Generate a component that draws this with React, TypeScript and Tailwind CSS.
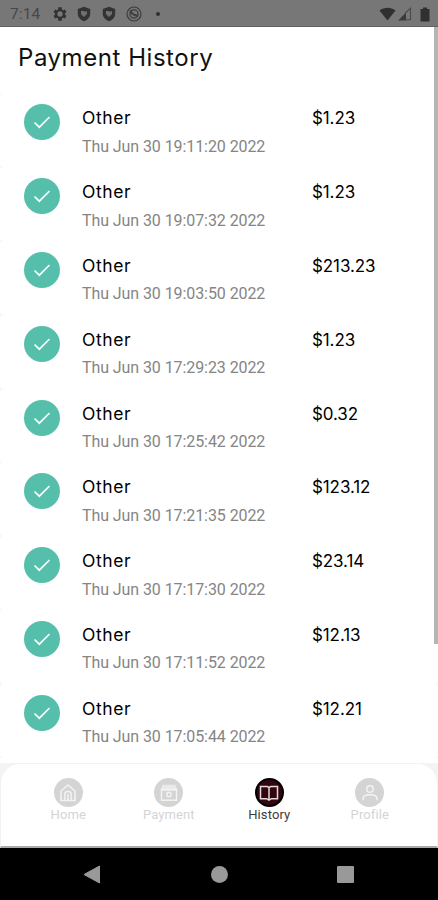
import React from "react";

const payments = [
  { title: "Other", date: "Thu Jun 30 19:11:20 2022", amount: "$1.23" },
  { title: "Other", date: "Thu Jun 30 19:07:32 2022", amount: "$1.23" },
  { title: "Other", date: "Thu Jun 30 19:03:50 2022", amount: "$213.23" },
  { title: "Other", date: "Thu Jun 30 17:29:23 2022", amount: "$1.23" },
  { title: "Other", date: "Thu Jun 30 17:25:42 2022", amount: "$0.32" },
  { title: "Other", date: "Thu Jun 30 17:21:35 2022", amount: "$123.12" },
  { title: "Other", date: "Thu Jun 30 17:17:30 2022", amount: "$23.14" },
  { title: "Other", date: "Thu Jun 30 17:11:52 2022", amount: "$12.13" },
  { title: "Other", date: "Thu Jun 30 17:05:44 2022", amount: "$12.21" },
];

function ShieldIcon() {
  return (
    <svg width="14" height="16" viewBox="0 0 14 16">
      <path d="M7 .8 13.200 3v4.800c0 3.500-2.600 6.200-6.200 7.400C3.400 14 .8 11.300.8 7.800V3Z" fill="#333" />
      <path d="M4 5h3l1 .7L10 5v3L7 11 4 8.200Z" fill="#707070" />
    </svg>
  );
}

function StatusBar() {
  return (
    <div className="flex h-[27px] shrink-0 items-center border-b border-[#626262] bg-[#777777] pl-[10px] pr-[8px] pt-[2px]">
      <span className="w-[42px] pt-[2px] font-['Roboto',sans-serif] text-[15.5px] leading-none tracking-[0.1px] text-[#484848]">
        7:14
      </span>
      <svg width="16" height="16" viewBox="0 0 24 24" fill="#333">
        <path d="M19.400 13a7.800 7.800 0 0 0 0-2l2.300-1.800-2.200-3.800-2.700 1.100a8 8 0 0 0-1.800-1L14.600 2H9.400L9 5.500a8 8 0 0 0-1.800 1L4.500 5.400 2.300 9.200 4.600 11a7.800 7.800 0 0 0 0 2l-2.300 1.800 2.200 3.800 2.700-1.100a8 8 0 0 0 1.800 1l.4 3.500h5.200l.4-3.500a8 8 0 0 0 1.800-1l2.700 1.100 2.200-3.800ZM12 16a4 4 0 1 1 0-8 4 4 0 0 1 0 8Z" />
      </svg>
      <div className="ml-[9px] flex gap-[11px]">
        <ShieldIcon />
        <ShieldIcon />
      </div>
      <svg className="ml-[10px]" width="16" height="16" viewBox="0 0 16 16" fill="none" stroke="#3b3b3b">
        <circle cx="8" cy="8" r="7" strokeWidth="1.200" />
        <circle cx="8" cy="8" r="4.100" strokeWidth="1.300" />
        <path d="M4.300 4.500c1.200 3.500 3.600 4.800 7.300 5.300" strokeWidth="2" />
      </svg>
      <span className="ml-[14px] size-1 rounded-full bg-[#303030]" />
      <svg className="ml-auto" width="17" height="14" viewBox="0 0 17 14">
        <path d="M.5 3.400C5.200-.1 11.800-.1 16.500 3.400L8.500 13.500Z" fill="#303030" />
      </svg>
      <svg className="ml-[2px]" width="14" height="14" viewBox="0 0 14 14">
        <path d="M0 13.500 8 5.500v8Z" fill="#3b3b3b" />
        <path d="m7 6.500 5.500-5.300v11.600H7" fill="none" stroke="#4a4a4a" strokeWidth="1.100" />
      </svg>
      <svg className="ml-[8px]" width="10" height="15" viewBox="0 0 10 15">
        <path d="M3 .5h4V2h2.500v12.500h-9V2H3Z" fill="#303030" />
      </svg>
    </div>
  );
}

function PaymentRow({ title, date, amount }: { title: string; date: string; amount: string }) {
  return (
    <div className="bg-[#f7f7f7]">
      <div className="flex h-[73.8px] rounded-[4px] bg-white pl-[24px] pt-[11px]">
        <div className="flex size-9 shrink-0 items-center justify-center rounded-full bg-[#56bfac]">
          <svg width="18" height="14" viewBox="0 0 18 14" fill="none" stroke="#f4fffc" strokeWidth="1.700">
            <path d="m1.500 7.500 4.800 4.700L16.500 2" />
          </svg>
        </div>
        <div className="ml-[22px] w-[230px]">
          <p className="mt-[2px] font-['Inter',sans-serif] text-[17.5px] leading-6 tracking-[0.6px] text-black">
            {title}
          </p>
          <p className="mt-[5.5px] font-['Roboto',sans-serif] text-[16px] leading-[22px] tracking-[-0.08px] text-[#858585]">
            {date}
          </p>
        </div>
        <p className="mt-[2px] font-['Inter',sans-serif] text-[17px] leading-6 tracking-[-0.1px] text-black">
          {amount}
        </p>
      </div>
    </div>
  );
}

function HomeIcon() {
  return (
    <svg width="20" height="20" viewBox="0 0 20 20" fill="none" stroke="#f3f3f3" strokeWidth="1.500">
      <path d="M3 8 10 2l7 6v9.500H3Z" />
      <path d="M6.800 17v-6c0-3.500 6.400-3.500 6.400 0v6M10 11v6" />
    </svg>
  );
}

function WalletIcon() {
  return (
    <svg width="20" height="20" viewBox="0 0 20 20" fill="none" stroke="#f3f3f3" strokeWidth="1.400">
      <path d="M2.500 7 4 2.500h12L17.500 7Z" fill="#eaeaea" stroke="#eaeaea" />
      <path d="M2.500 6.500h15v10.700h-15Z" />
      <circle cx="10" cy="11.500" r="2.200" />
    </svg>
  );
}

function BookIcon() {
  return (
    <svg width="20" height="20" viewBox="0 0 20 20" fill="none" stroke="#e5d9db" strokeWidth="1.500">
      <path d="M1.500 3.500h6.700L10 4.500l1.800-1h6.700v12.200h-6L10 17.200l-2.500-1.500h-6ZM10 4.500v12.500" />
    </svg>
  );
}

function ProfileIcon() {
  return (
    <svg width="20" height="20" viewBox="0 0 20 20" fill="none" stroke="#f3f3f3" strokeWidth="1.500">
      <circle cx="10" cy="6" r="3.300" />
      <path d="M3 17.300v-1.800c0-5 14-5 14 0v1.800" />
    </svg>
  );
}

const tabs = [
  { label: "Home", icon: <HomeIcon />, active: false },
  { label: "Payment", icon: <WalletIcon />, active: false },
  { label: "History", icon: <BookIcon />, active: true },
  { label: "Profile", icon: <ProfileIcon />, active: false },
];

function TabBar() {
  return (
    <div className="h-[85px] shrink-0 bg-[#f4f4f4]">
      <div className="flex h-full rounded-t-[20px] border border-b-2 border-[#f2f2f2] border-b-[#aaaaaa] bg-white pl-[17px] pr-[17px] pt-[14px]">
        {tabs.map((tab) => (
          <div key={tab.label} className="flex flex-1 flex-col items-center">
            <div
              className={
                tab.active
                  ? "flex size-[29px] items-center justify-center rounded-full border-2 border-black bg-[#32070f]"
                  : "flex size-[29px] items-center justify-center rounded-full bg-[#d4d4d4]"
              }
            >
              {tab.icon}
            </div>
            <span
              className={
                tab.active
                  ? "font-['Roboto',sans-serif] text-[13px] leading-4 tracking-[0.1px] text-[#3c3c3c]"
                  : "font-['Roboto',sans-serif] text-[13px] leading-4 tracking-[0.1px] text-[#d4d4d4]"
              }
            >
              {tab.label}
            </span>
          </div>
        ))}
      </div>
    </div>
  );
}

function SystemNav() {
  return (
    <div className="flex h-[52px] shrink-0 items-center justify-between bg-black pl-[83px] pr-[84px]">
      <svg width="18" height="19" viewBox="0 0 18 19">
        <path d="M1 9.500 16.500 1v17Z" fill="#999" stroke="#999" strokeLinejoin="round" />
      </svg>
      <span className="size-[17px] rounded-full bg-[#999999]" />
      <span className="size-[17px] rounded-[1px] bg-[#999999]" />
    </div>
  );
}

function App() {
  return (
    <div className="flex h-[900px] w-[438px] flex-col overflow-hidden bg-white">
      <StatusBar />
      <div className="relative min-h-0 flex-1 overflow-hidden bg-white">
        <h1 className="h-[66.4px] pl-[18px] pt-[14px] font-['Inter',sans-serif] text-[24px] leading-[34px] tracking-[0.55px] text-[#111]">
          Payment History
        </h1>
        {payments.map((payment) => (
          <PaymentRow key={payment.date} {...payment} />
        ))}
        {/* Scroll indicator */}
        <div className="absolute right-0 top-0 h-[617px] w-1 bg-[#b5b5b5]" />
      </div>
      <TabBar />
      <SystemNav />
    </div>
  );
}

export default App;
